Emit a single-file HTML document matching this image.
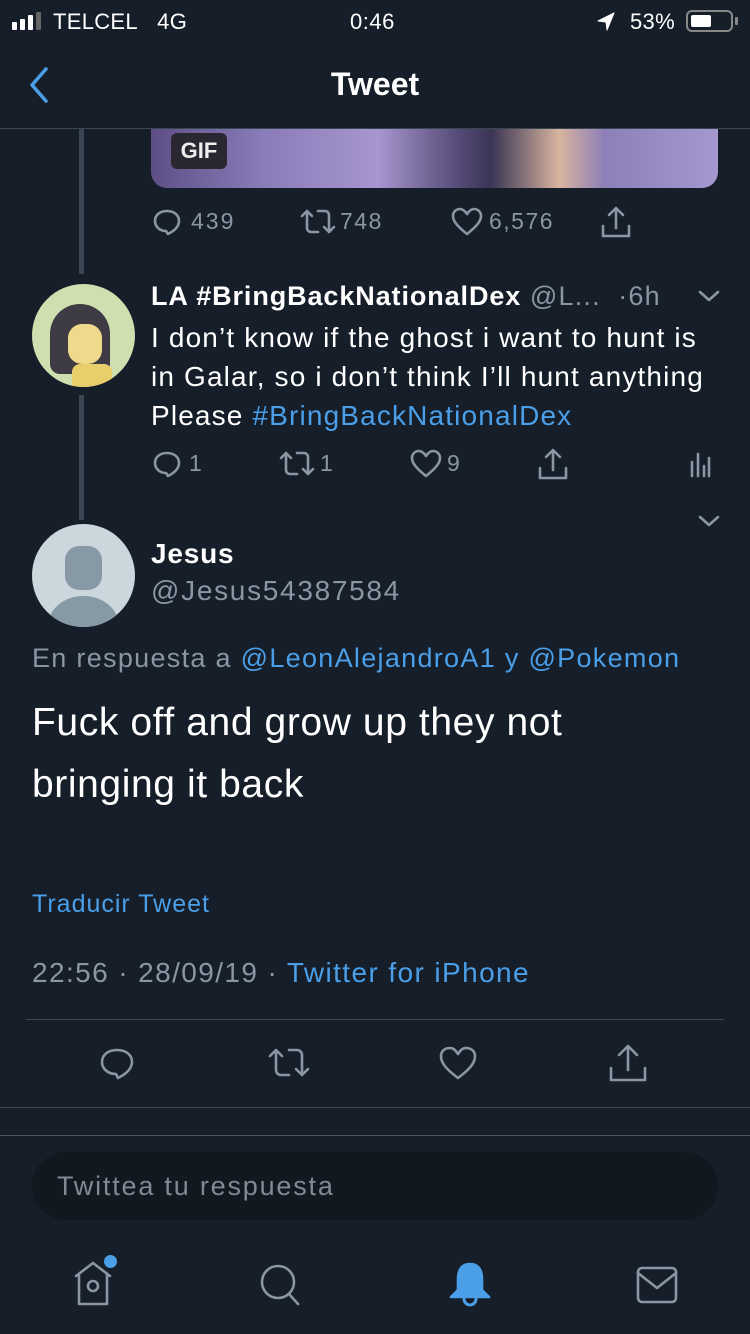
<!DOCTYPE html>
<html><head><meta charset="utf-8"><style>
*{margin:0;padding:0;box-sizing:border-box}
body{width:750px;height:1334px;background:#161e29;color:#fff;font-family:"Liberation Sans",sans-serif;position:relative;overflow:hidden;letter-spacing:1.2px}
.a{position:absolute;white-space:nowrap}
.g{color:#8a97a3}
.b{color:#4a9fe8}
svg{position:absolute;fill:none;stroke:#8a97a3;stroke-width:2.6;stroke-linecap:round;stroke-linejoin:round}
</style></head><body>
<!-- status bar -->
<div class="a" style="left:12px;top:12px;display:flex;align-items:flex-end;gap:3px">
<i style="width:5px;height:8px;background:#fff;border-radius:1px"></i><i style="width:5px;height:11px;background:#fff;border-radius:1px"></i><i style="width:5px;height:15px;background:#fff;border-radius:1px"></i><i style="width:5px;height:18px;background:#666;border-radius:1px"></i></div>
<div class="a" style="left:53px;top:9px;font-size:22px;letter-spacing:0.3px">TELCEL&nbsp;&nbsp;&nbsp;4G</div>
<div class="a" style="left:350px;top:9px;font-size:22px;letter-spacing:0.5px">0:46</div>
<svg style="left:595px;top:11px" width="22" height="22" viewBox="0 0 22 22"><path d="M19 2 L3 10 L11 11 L12 19 Z" fill="#fff" stroke="#fff" stroke-width="1"/></svg>
<div class="a" style="left:630px;top:9px;font-size:22px;letter-spacing:0.3px">53%</div>
<div class="a" style="left:686px;top:10px;width:47px;height:22px;border:2px solid #888;border-radius:6px"><div style="position:absolute;left:3px;top:3px;width:20px;height:12px;background:#fff;border-radius:2px"></div></div>
<div class="a" style="left:735px;top:17px;width:3px;height:8px;background:#888;border-radius:1px"></div>
<!-- nav -->
<svg style="left:26px;top:66px;stroke:#4a9fe8;stroke-width:3.5" width="26" height="38" viewBox="0 0 26 38"><path d="M20 3 L6 19 L20 35"/></svg>
<div class="a" style="left:0;width:750px;text-align:center;top:66px;font-size:32px;font-weight:bold;letter-spacing:0">Tweet</div>
<div class="a" style="left:0;top:128px;width:750px;height:1px;background:#3a4651"></div>
<!-- thread line -->
<div class="a" style="left:79px;top:129px;width:5px;height:145px;background:#3a4651"></div>
<div class="a" style="left:79px;top:395px;width:5px;height:125px;background:#3a4651"></div>
<!-- gif -->
<div class="a" style="left:151px;top:129px;width:567px;height:59px;border-radius:0 0 16px 16px;background:linear-gradient(90deg,#5d4f85,#8a7cb8 20%,#a796cf 40%,#514773 55%,#3a3555 60%,#d8b49f 72%,#8d7fb7 80%,#a597cf)"></div>
<div class="a" style="left:171px;top:133px;width:56px;height:36px;background:#2a2733;border-radius:6px;font-size:22px;font-weight:bold;text-align:center;line-height:36px;color:#eee;letter-spacing:0">GIF</div>
<!-- action row 1 -->
<svg style="left:152px;top:206px" width="32" height="32" viewBox="0 0 32 32"><path d="M14 25 C7 25 3 20 3 15 C3 9 8 5 15 5 C22 5 27 9 27 15 C27 21 22 25 16 28 Z"/></svg>
<div class="a g" style="left:191px;top:208px;font-size:23px;letter-spacing:2px">439</div>
<svg style="left:298px;top:206px" width="40" height="32" viewBox="0 0 40 32"><path d="M4 10 L9 5 L14 10 M9 5 V22 a4 4 0 0 0 4 4 H20 M36 21 L31 26 L26 21 M31 26 V9 a4 4 0 0 0 -4 -4 H20"/></svg>
<div class="a g" style="left:340px;top:208px;font-size:23px;letter-spacing:1.5px">748</div>
<svg style="left:450px;top:206px" width="34" height="32" viewBox="0 0 34 32"><path d="M17 28 C7 20 3 15 3 10 C3 6 6 3 10 3 C13 3 15 5 17 8 C19 5 21 3 24 3 C28 3 31 6 31 10 C31 15 27 20 17 28 Z"/></svg>
<div class="a g" style="left:489px;top:208px;font-size:23px;letter-spacing:1.5px">6,576</div>
<svg style="left:599px;top:204px" width="34" height="36" viewBox="0 0 34 36"><path d="M17 4 V24 M10 11 L17 4 L24 11 M4 22 V32 H30 V22"/></svg>
<!-- reply tweet -->
<div class="a" style="left:32px;top:284px;width:103px;height:103px;border-radius:50%;background:#cfe0b0;overflow:hidden">
<div style="position:absolute;left:18px;top:20px;width:60px;height:70px;border-radius:30px 30px 10px 10px;background:#3e3b45"></div>
<div style="position:absolute;left:36px;top:40px;width:34px;height:40px;border-radius:14px;background:#f0d98a"></div>
<div style="position:absolute;left:40px;top:80px;width:40px;height:30px;background:#e8cf6a;border-radius:8px"></div>
</div>
<div class="a" style="left:151px;top:281px;font-size:27px"><b style="letter-spacing:0.9px">LA #BringBackNationalDex</b> <span class="g">@L...&nbsp;&nbsp;·6h</span></div>
<svg style="left:697px;top:287px" width="24" height="18" viewBox="0 0 24 18"><path d="M3 5 L12 13 L21 5"/></svg>
<div class="a" style="left:151px;top:318px;font-size:28px;line-height:39px;letter-spacing:1.15px">I don’t know if the ghost i want to hunt is<br>in Galar, so i don’t think I’ll hunt anything<br>Please <span class="b">#BringBackNationalDex</span></div>
<svg style="left:152px;top:448px" width="32" height="32" viewBox="0 0 32 32"><path d="M14 25 C7 25 3 20 3 15 C3 9 8 5 15 5 C22 5 27 9 27 15 C27 21 22 25 16 28 Z"/></svg>
<div class="a g" style="left:189px;top:450px;font-size:23px">1</div>
<svg style="left:277px;top:448px" width="40" height="32" viewBox="0 0 40 32"><path d="M4 10 L9 5 L14 10 M9 5 V22 a4 4 0 0 0 4 4 H20 M36 21 L31 26 L26 21 M31 26 V9 a4 4 0 0 0 -4 -4 H20"/></svg>
<div class="a g" style="left:320px;top:450px;font-size:23px">1</div>
<svg style="left:409px;top:448px" width="34" height="32" viewBox="0 0 34 32"><path d="M17 28 C7 20 3 15 3 10 C3 6 6 3 10 3 C13 3 15 5 17 8 C19 5 21 3 24 3 C28 3 31 6 31 10 C31 15 27 20 17 28 Z"/></svg>
<div class="a g" style="left:447px;top:450px;font-size:23px">9</div>
<svg style="left:536px;top:446px" width="34" height="36" viewBox="0 0 34 36"><path d="M17 4 V24 M10 11 L17 4 L24 11 M4 22 V32 H30 V22"/></svg>
<svg style="left:688px;top:448px" width="24" height="32" viewBox="0 0 24 32"><path d="M4 14 V28 M10 6 V28 M16 18 V28 M21 10 V28"/></svg>
<svg style="left:697px;top:512px" width="24" height="18" viewBox="0 0 24 18"><path d="M3 5 L12 13 L21 5"/></svg>
<!-- main tweet -->
<div class="a" style="left:32px;top:524px;width:103px;height:103px;border-radius:50%;background:#ccd6dd;overflow:hidden"><div style="position:absolute;left:33px;top:22px;width:37px;height:44px;border-radius:14px;background:#8899a6"></div><div style="position:absolute;left:16px;top:72px;width:71px;height:60px;border-radius:50%;background:#8899a6"></div></div>
<div class="a" style="left:151px;top:538px;font-size:28px;font-weight:bold;letter-spacing:0.8px">Jesus</div>
<div class="a g" style="left:151px;top:575px;font-size:28px;letter-spacing:1.7px">@Jesus54387584</div>
<div class="a g" style="left:32px;top:643px;font-size:27px;letter-spacing:1.3px">En respuesta a <span class="b">@LeonAlejandroA1</span> <span class="b">y</span> <span class="b">@Pokemon</span></div>
<div class="a" style="left:32px;top:692px;font-size:39px;line-height:62px;letter-spacing:0.6px">Fuck off and grow up they not<br>bringing it back</div>
<div class="a b" style="left:32px;top:890px;font-size:25px;letter-spacing:1px">Traducir Tweet</div>
<div class="a g" style="left:32px;top:957px;font-size:28px;letter-spacing:1.4px">22:56 · 28/09/19 · <span class="b">Twitter for iPhone</span></div>
<div class="a" style="left:26px;top:1019px;width:698px;height:1px;background:#3a4651"></div>
<svg style="left:98px;top:1043px" width="40" height="40" viewBox="0 0 40 40"><path d="M18 31 C9 31 4 25 4 19 C4 12 10 7 19 7 C28 7 34 12 34 19 C34 26 28 31 20 35 Z"/></svg>
<svg style="left:266px;top:1044px" width="46" height="38" viewBox="0 0 46 38"><path d="M4 12 L10 6 L16 12 M10 6 V26 a5 5 0 0 0 5 5 H23 M42 25 L36 31 L30 25 M36 31 V11 a5 5 0 0 0 -5 -5 H23"/></svg>
<svg style="left:438px;top:1044px" width="40" height="38" viewBox="0 0 40 38"><path d="M20 34 C8 25 3 19 3 12 C3 7 7 4 12 4 C16 4 18 7 20 10 C22 7 24 4 28 4 C33 4 37 7 37 12 C37 19 32 25 20 34 Z"/></svg>
<svg style="left:607px;top:1042px" width="42" height="42" viewBox="0 0 42 42"><path d="M21 4 V28 M12 13 L21 4 L30 13 M4 26 V38 H38 V26"/></svg>
<div class="a" style="left:0;top:1107px;width:750px;height:1px;background:#3a4651"></div>
<div class="a" style="left:0;top:1135px;width:750px;height:1px;background:#4a5560"></div>
<!-- bottom -->
<div class="a" style="left:32px;top:1152px;width:686px;height:68px;border-radius:34px;background:#12181f"></div>
<div class="a" style="left:57px;top:1171px;font-size:27px;color:#7f8a94;letter-spacing:1.8px">Twittea tu respuesta</div>
<svg style="left:70px;top:1260px" width="50" height="50" viewBox="0 0 50 50"><path d="M6 16 L23 3 L40 16 M9 14 V44 H37 V14"/><circle cx="23" cy="26" r="5"/></svg>
<div class="a" style="left:104px;top:1255px;width:13px;height:13px;border-radius:50%;background:#4a9fe8"></div>
<svg style="left:258px;top:1262px" width="46" height="46" viewBox="0 0 46 46"><circle cx="20" cy="20" r="16"/><path d="M31 32 L40 42"/></svg>
<svg style="left:446px;top:1260px;stroke:#4a9fe8;fill:#4a9fe8" width="48" height="50" viewBox="0 0 48 50"><path d="M24 4 C15 4 12 11 12 20 V30 L5 37 H43 L36 30 V20 C36 11 33 4 24 4 Z"/><path d="M18 39 a6 6 0 0 0 12 0" fill="none" stroke-width="3"/></svg>
<svg style="left:634px;top:1264px" width="46" height="42" viewBox="0 0 46 42"><rect x="4" y="4" width="38" height="34" rx="4"/><path d="M4 9 L23 24 L42 9"/></svg>
</body></html>
